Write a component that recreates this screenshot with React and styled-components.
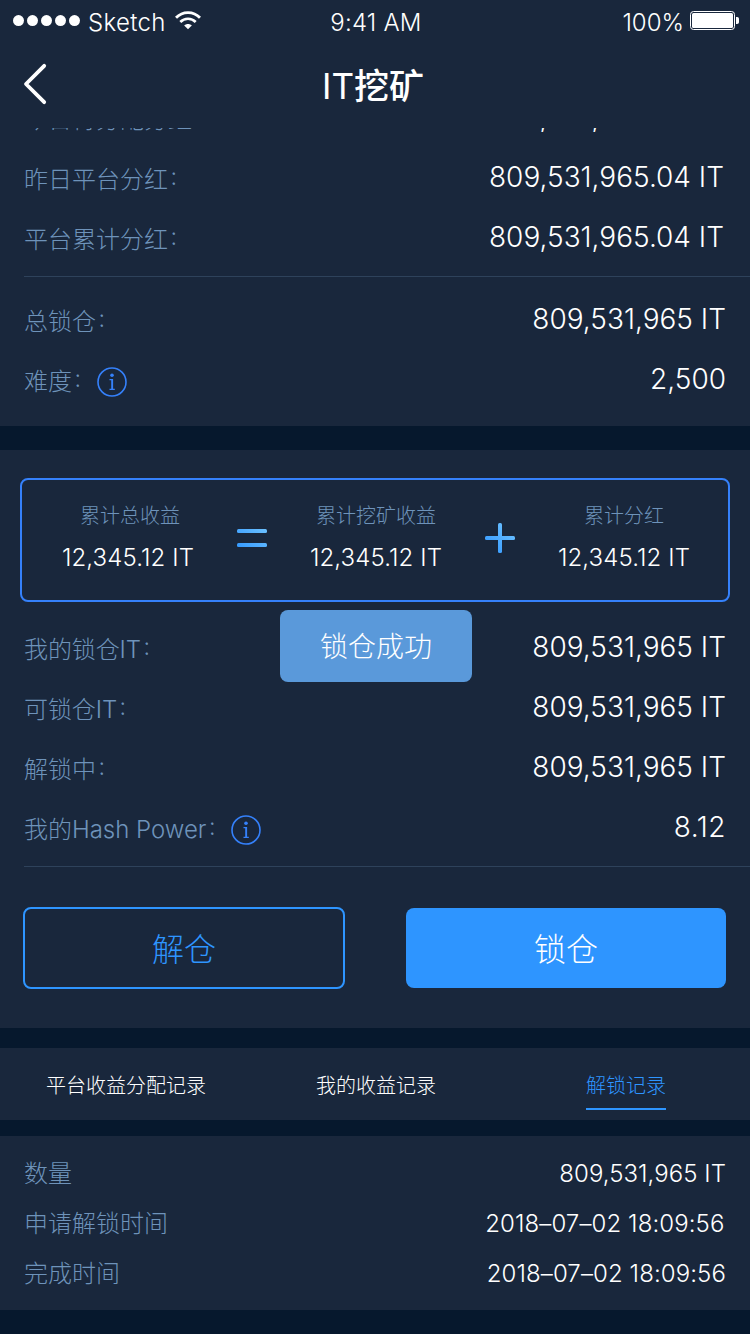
import React from "react";
import styled, { createGlobalStyle } from "styled-components";

const color = {
  page: "#06182d",
  panel: "#19273c",
  label: "#6e93ba",
  line: "#2e425b",
  accent: "#2e95ff",
  frame: "#3581fb",
  toast: "#5a99da",
};

const GlobalStyle = createGlobalStyle`
  *, *::before, *::after { box-sizing: border-box; }
  body {
    margin: 0;
    background: ${color.page};
    color: #fff;
    font-family: Inter, "Noto Sans CJK SC", sans-serif;
    font-weight: 300;
  }
  button { font: inherit; }
`;

const Screen = styled.main`
  position: relative;
  width: 750px;
  height: 1334px;
  overflow: hidden;
  background: ${color.page};
`;

const StatusBar = styled.div`
  display: grid;
  grid-template-columns: 1fr auto 1fr;
  align-items: center;
  height: 40px;
  padding: 5px 11px 0 13px;
  background: ${color.panel};
  font-size: 24px;
  line-height: 35px;
  font-weight: 350;
`;

const StatusGroup = styled.div`
  display: flex;
  align-items: center;
  justify-content: ${(p) => (p.$end ? "flex-end" : "flex-start")};
  svg { display: block; margin-bottom: 4px; }
`;

const StatusText = styled.span`
  letter-spacing: ${(p) => p.$spacing || 0}px;
  margin: 0 ${(p) => p.$right || 0}px 0 ${(p) => p.$left || 0}px;
`;

const NavBar = styled.header`
  display: grid;
  grid-template-columns: 60px 1fr 60px;
  align-items: center;
  height: 88px;
  padding: 0 22px;
  background: ${color.panel};
`;

const BackButton = styled.button`
  width: 28px;
  height: 44px;
  padding: 0;
  border: 0;
  background: none;
  svg { display: block; }
`;

const Title = styled.h1`
  margin: 0 0 0 -4px;
  padding-top: 4px;
  text-align: center;
  font-size: 35px;
  line-height: 48px;
  font-weight: 500;
  span { font-weight: 400; }
`;

const Panel = styled.section`
  height: ${(p) => p.$height}px;
  margin-bottom: ${(p) => p.$gap || 0}px;
  padding-top: ${(p) => p.$top || 0}px;
  overflow: hidden;
  background: ${color.panel};
`;

const Rows = styled.div`
  margin-top: ${(p) => p.$offset || 0}px;
`;

const Row = styled.div`
  display: flex;
  justify-content: space-between;
  align-items: flex-start;
  height: 60px;
  padding: 0 ${(p) => p.$inset || 24}px 0 24px;
`;

const Label = styled.span`
  display: flex;
  align-items: center;
  height: 60px;
  color: ${color.label};
  font-size: 24px;
  line-height: 60px;
  white-space: nowrap;
  svg { margin-left: 1px; }
`;

const LabelText = styled.span`
  height: 60px;
  letter-spacing: ${(p) => p.$spacing || 0}px;
`;

const Colon = styled.span`
  display: inline-block;
  width: 24px;
  padding-left: 1px;
  font-size: 19px;
  line-height: 1;
  vertical-align: 3px;
`;

const Value = styled.span`
  font-size: 28px;
  line-height: 54px;
  font-weight: 350;
  white-space: nowrap;
  letter-spacing: ${(p) => p.$spacing || 0}px;
`;

const Divider = styled.hr`
  height: 1px;
  margin: ${(p) => p.$top}px 0 ${(p) => p.$bottom}px 24px;
  border: 0;
  background: ${color.line};
`;

const Summary = styled.div`
  display: flex;
  height: 124px;
  margin: 0 20px;
  padding: 0 22px 0 24px;
  border: 2px solid ${color.frame};
  border-radius: 8px;
`;

const Term = styled.div`
  width: 164px;
  padding-top: 21px;
  text-align: center;
  white-space: nowrap;
`;

const TermLabel = styled.div`
  padding-left: ${(p) => p.$shift || 0}px;
  color: ${color.label};
  font-size: 20px;
  line-height: 30px;
`;

const TermValue = styled.div`
  margin-top: 9px;
  font-size: 24px;
  font-weight: 350;
  line-height: 36px;
  letter-spacing: 0.12px;
`;

const Operator = styled.div`
  display: flex;
  justify-content: center;
  width: 84px;
  padding-top: 43px;
`;

const Actions = styled.div`
  display: flex;
  justify-content: space-between;
  align-items: center;
  padding: 0 24px 0 23px;
`;

const Action = styled.button`
  width: ${(p) => (p.$filled ? 320 : 322)}px;
  height: ${(p) => (p.$filled ? 80 : 82)}px;
  padding: 4px 0 0;
  border: ${(p) => (p.$filled ? "0" : `2px solid ${color.accent}`)};
  border-radius: 8px;
  background: ${(p) => (p.$filled ? color.accent : "transparent")};
  color: ${(p) => (p.$filled ? "#fff" : color.accent)};
  font-size: 32px;
  line-height: 74px;
`;

const Tabs = styled.nav`
  display: grid;
  grid-template-columns: repeat(3, 250px);
  justify-items: center;
  height: 72px;
  margin-bottom: 16px;
  padding-left: 1px;
  background: ${color.panel};
`;

const Tab = styled.a`
  height: 62px;
  border-bottom: 2px solid ${(p) => (p.$active ? color.accent : "transparent")};
  color: ${(p) => (p.$active ? color.accent : "#fff")};
  font-size: 20px;
  line-height: 76px;
`;

const RecordRow = styled.div`
  display: flex;
  justify-content: space-between;
  height: 50px;
  padding: 1px ${(p) => p.$inset || 24}px 0 24px;
  font-size: 24px;
  line-height: 50px;
`;

const RecordLabel = styled.span`
  color: ${color.label};
`;

const RecordValue = styled.span`
  font-weight: 350;
  letter-spacing: ${(p) => p.$spacing || 0}px;
`;

const Toast = styled.div`
  position: absolute;
  top: 610px;
  left: 280px;
  width: 192px;
  height: 72px;
  border-radius: 8px;
  background: ${color.toast};
  text-align: center;
  font-size: 28px;
  line-height: 75px;
`;

const SignalDots = () => (
  <svg width="68" height="12" viewBox="0 0 68 12" fill="#fff">
    {[5.5, 19.5, 33.5, 47.5, 61.5].map((x) => (
      <circle key={x} cx={x} cy="5.6" r="5.5" />
    ))}
  </svg>
);

const WifiIcon = () => (
  <svg width="26" height="19" viewBox="0 0 26 19" fill="none" stroke="#fff">
    <path d="M1 6.8C7.5-.2 18.500-.2 25 6.800" strokeWidth="2.800" />
    <path d="M5.300 11C9.600 6.600 16.400 6.600 20.700 11" strokeWidth="2.600" />
    <path d="M13 18.300 9.200 14.500C11.300 12.500 14.700 12.500 16.800 14.500Z" fill="#fff" stroke="none" />
  </svg>
);

const BatteryIcon = () => (
  <svg width="49" height="19" viewBox="0 0 49 19">
    <rect x="0.500" y="0.500" width="44" height="18" rx="3" fill="none" stroke="#fff" />
    <rect x="2" y="2" width="41" height="15" rx="1.500" fill="#fff" />
    <path d="M46 6h1.200a1.800 1.800 0 0 1 1.800 1.800v3.400a1.800 1.800 0 0 1-1.800 1.800H46z" fill="#fff" />
  </svg>
);

const BackIcon = () => (
  <svg width="28" height="44" viewBox="0 0 28 44" fill="none" stroke="#fff" strokeWidth="3.800" strokeLinecap="round" strokeLinejoin="round">
    <path d="M22.200 3.800 4 22l18.200 18.200" />
  </svg>
);

const InfoIcon = () => (
  <svg width="30" height="30" viewBox="0 0 30 30">
    <circle cx="15" cy="15" r="14" fill="none" stroke={color.frame} strokeWidth="1.600" />
    <circle cx="15" cy="8.200" r="1.800" fill={color.frame} />
    <path d="M12.500 12h3.600v9.800h1.700v1.200h-5.300v-1.200h1.700v-8.600h-1.700z" fill={color.frame} />
  </svg>
);

const OperatorIcon = ({ type }) => (
  <svg width="30" height="30" viewBox="0 0 30 30">
    <defs>
      <linearGradient id={`fill-${type}`} gradientUnits="userSpaceOnUse" x1="0" y1="30" x2="30" y2="0">
        <stop offset="0" stopColor="#2e95ff" />
        <stop offset="1" stopColor="#73c6ff" />
      </linearGradient>
    </defs>
    <g fill={`url(#fill-${type})`}>
      {type === "equals" ? (
        <>
          <rect y="6" width="30" height="4" rx="1.500" />
          <rect y="20" width="30" height="4" rx="1.500" />
        </>
      ) : (
        <>
          <rect y="13" width="30" height="4" rx="1.500" />
          <rect x="13" width="4" height="30" rx="1.500" />
        </>
      )}
    </g>
  </svg>
);

const DataRow = ({ label, value, info, spacing, labelSpacing, inset }) => (
  <Row $inset={inset}>
    <Label>
      <LabelText $spacing={labelSpacing}>
        {label}
        <Colon>：</Colon>
      </LabelText>
      {info && <InfoIcon />}
    </Label>
    <Value $spacing={spacing}>{value}</Value>
  </Row>
);

const SummaryTerm = ({ label, value, shift }) => (
  <Term>
    <TermLabel $shift={shift}>{label}</TermLabel>
    <TermValue>{value}</TermValue>
  </Term>
);

export default function App() {
  return (
    <Screen lang="zh-CN">
      <GlobalStyle />
      <StatusBar>
        <StatusGroup>
          <SignalDots />
          <StatusText $left={7} $right={9} $spacing={0.35}>Sketch</StatusText>
          <WifiIcon />
        </StatusGroup>
        <StatusText $spacing={0.2}>9:41 AM</StatusText>
        <StatusGroup $end>
          <StatusText $right={6}>100%</StatusText>
          <BatteryIcon />
        </StatusGroup>
      </StatusBar>
      <NavBar>
        <BackButton aria-label="返回">
          <BackIcon />
        </BackButton>
        <Title><span>IT</span>挖矿</Title>
      </NavBar>

      <Panel $height={298} $gap={24}>
        <Rows $offset={-38}>
          <DataRow label="今日待分配分红" value="809,531,965.04 IT" inset={26} />
          <DataRow label="昨日平台分红" value="809,531,965.04 IT" inset={26} />
          <DataRow label="平台累计分红" value="809,531,965.04 IT" inset={26} />
        </Rows>
        <Divider $top={6} $bottom={15} />
        <DataRow label="总锁仓" value="809,531,965 IT" />
        <DataRow label="难度" value="2,500" info />
      </Panel>

      <Panel $height={578} $gap={20} $top={28}>
        <Summary>
          <SummaryTerm label="累计总收益" value="12,345.12 IT" shift={4} />
          <Operator><OperatorIcon type="equals" /></Operator>
          <SummaryTerm label="累计挖矿收益" value="12,345.12 IT" />
          <Operator><OperatorIcon type="plus" /></Operator>
          <SummaryTerm label="累计分红" value="12,345.12 IT" />
        </Summary>
        <Rows $offset={18}>
          <DataRow label="我的锁仓IT" labelSpacing={-0.1} value="809,531,965 IT" />
          <DataRow label="可锁仓IT" labelSpacing={-0.1} value="809,531,965 IT" />
          <DataRow label="解锁中" value="809,531,965 IT" />
          <DataRow label="我的Hash Power" labelSpacing={-0.02} value="8.12" spacing={0.5} info />
        </Rows>
        <Divider $top={6} $bottom={40} />
        <Actions>
          <Action>解仓</Action>
          <Action $filled>锁仓</Action>
        </Actions>
      </Panel>

      <Tabs>
        <Tab>平台收益分配记录</Tab>
        <Tab>我的收益记录</Tab>
        <Tab $active>解锁记录</Tab>
      </Tabs>

      <Panel $height={174} $top={12}>
        <RecordRow>
          <RecordLabel>数量</RecordLabel>
          <RecordValue $spacing={0.05}>809,531,965 IT</RecordValue>
        </RecordRow>
        <RecordRow $inset={25.5}>
          <RecordLabel>申请解锁时间</RecordLabel>
          <RecordValue $spacing={0.1}>2018–07–02 18:09:56</RecordValue>
        </RecordRow>
        <RecordRow>
          <RecordLabel>完成时间</RecordLabel>
          <RecordValue $spacing={0.1}>2018–07–02 18:09:56</RecordValue>
        </RecordRow>
      </Panel>

      <Toast role="status">锁仓成功</Toast>
    </Screen>
  );
}
